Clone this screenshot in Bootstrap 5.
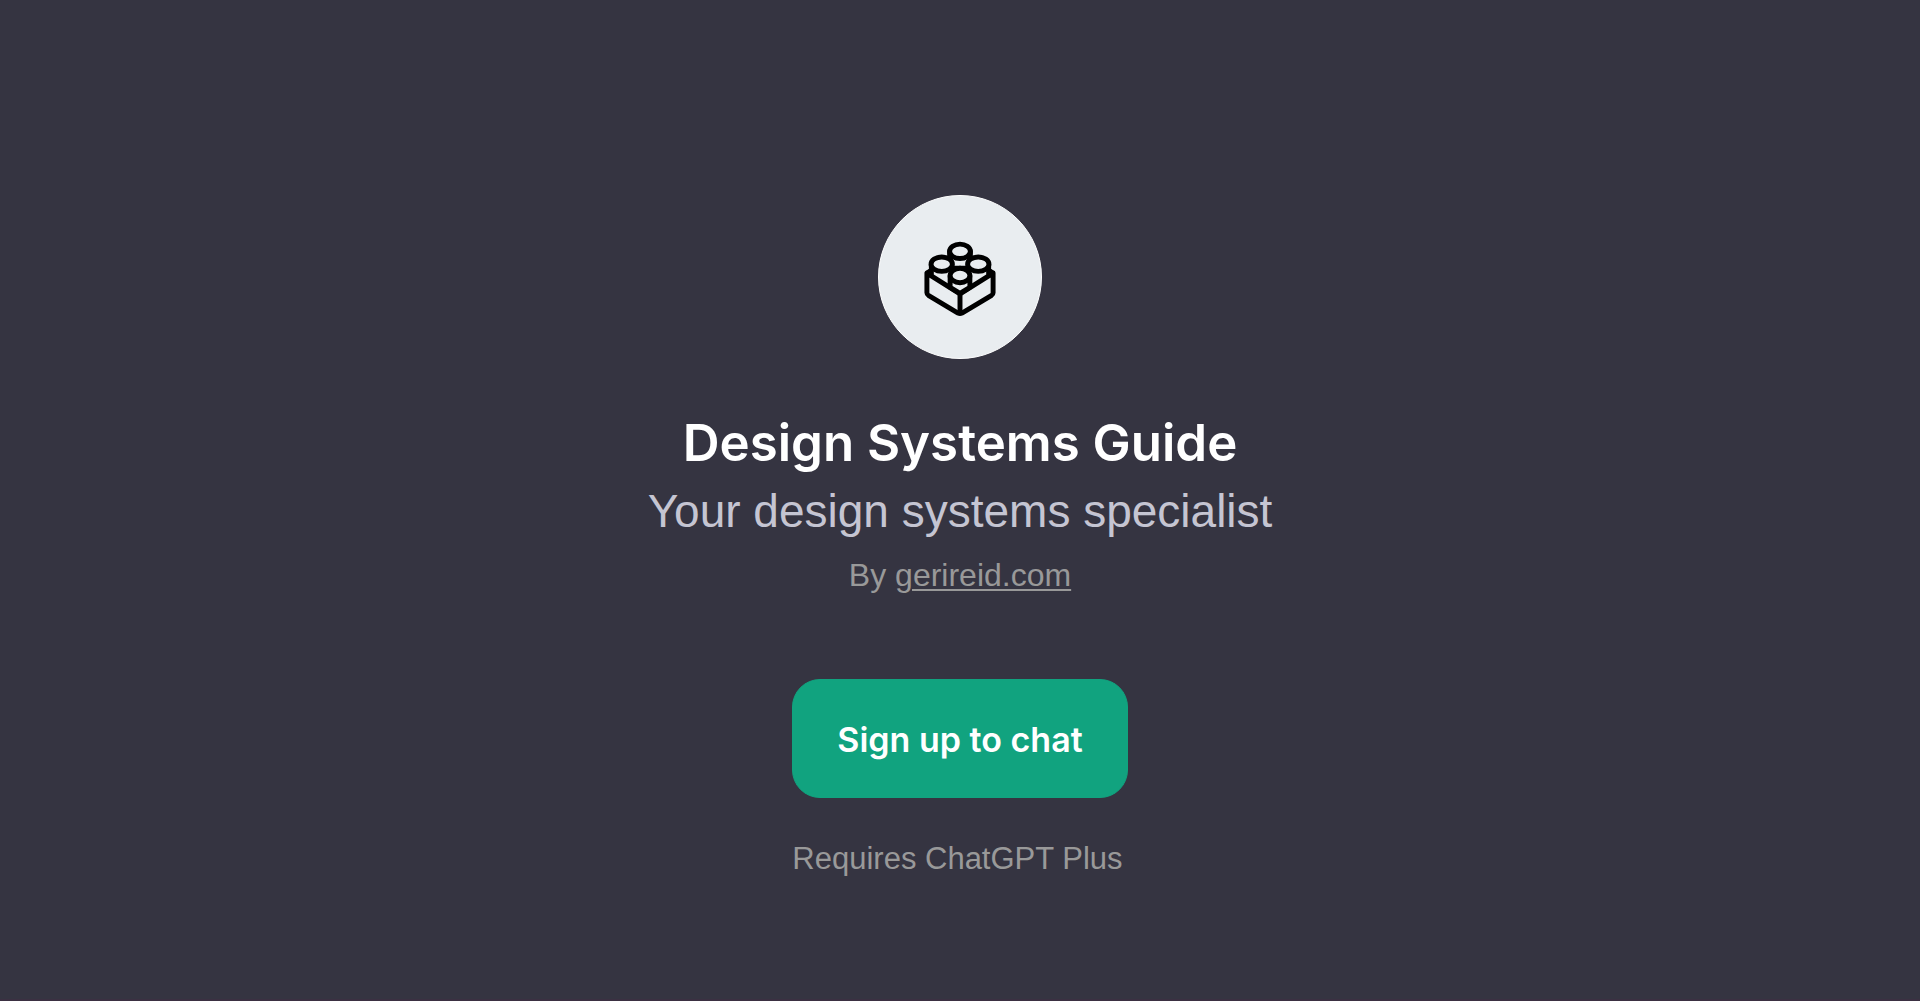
<!DOCTYPE html>
<html lang="en">
<head>
<meta charset="utf-8">
<meta name="viewport" content="width=device-width, initial-scale=1">
<title>Design Systems Guide</title>
<link href="https://cdn.jsdelivr.net/npm/bootstrap@5.3.0/dist/css/bootstrap.min.css" rel="stylesheet">
<style>
  body { background: #353441; font-family: "Liberation Sans", Arial, sans-serif; border-bottom: 2px solid #3b3042; }
  .page-main { padding-top: 54px; }
  .avatar { width: 164px; height: 164px; background: #e9edf0; border: 1px solid #fff; }
  .title { font-family: Inter, sans-serif; font-size: 51px; line-height: 72px; font-weight: 600; color: #fff; }
  .tagline { font-size: 46px; line-height: 64px; color: #c5c5d2; }
  .byline { font-size: 32px; line-height: 48px; color: #999; }
  .byline a { text-decoration-thickness: 2px; text-underline-offset: 3px; }
  .requirement { font-size: 31px; line-height: 48px; color: #999; }
  .action-group { margin-top: 80px; gap: 37px; }
  .btn-signup { --bs-btn-color: #fff; --bs-btn-bg: #11a37f; --bs-btn-border-color: #11a37f;
    --bs-btn-hover-color: #fff; --bs-btn-hover-bg: #0e906f; --bs-btn-hover-border-color: #0e906f;
    --bs-btn-font-family: Inter, sans-serif; --bs-btn-font-size: 34px; --bs-btn-font-weight: 600;
    --bs-btn-padding-x: 44px; --bs-btn-border-radius: 28px; line-height: 52px; padding-top: 34px; padding-bottom: 31px; }
</style>
</head>
<body class="min-vh-100 d-flex flex-column">
<main class="page-main flex-grow-1 d-flex flex-column align-items-center justify-content-center text-center">
  <div class="avatar rounded-circle overflow-hidden mt-4">
    <svg class="d-block w-100 h-100" viewBox="0 0 164 164" fill="#e9edf0" stroke="#000" stroke-width="5" stroke-linejoin="round" stroke-linecap="round" role="img" aria-label="Building brick">
      <path d="M71.500 56v17M92.500 56v17"/>
      <ellipse cx="82" cy="56" rx="10.500" ry="7.300"/>
      <path d="M72 73h20"/>
      <path d="M53 69v10M111 69v10M53 75l-4 3M111 75l4 3"/>
      <path d="M48.500 78v20q0 1.500 1.500 2.500L80 118.500q2 1 4 0L114 100.500q1.500-1 1.500-2.500V78L82 99z"/>
      <path d="M82 99v19"/>
      <path d="M72 81v11.500L82 98.500L92 92.500V81"/>
      <ellipse cx="63.500" cy="69" rx="10.800" ry="7.300"/>
      <ellipse cx="100.500" cy="69" rx="10.800" ry="7.300"/>
      <ellipse cx="82" cy="80.500" rx="10" ry="7.300"/>
    </svg>
  </div>
  <h1 class="title mt-5 mb-0">Design Systems Guide</h1>
  <p class="tagline mb-0">Your design systems specialist</p>
  <p class="byline mb-0 mt-2">By <a class="text-reset" href="#">gerireid.com</a></p>
  <div class="action-group d-flex flex-column align-items-start">
    <button type="button" class="btn btn-signup">Sign up to chat</button>
    <p class="requirement mb-0">Requires ChatGPT Plus</p>
  </div>
</main>
<script src="https://cdn.jsdelivr.net/npm/bootstrap@5.3.0/dist/js/bootstrap.bundle.min.js"></script>
</body>
</html>
